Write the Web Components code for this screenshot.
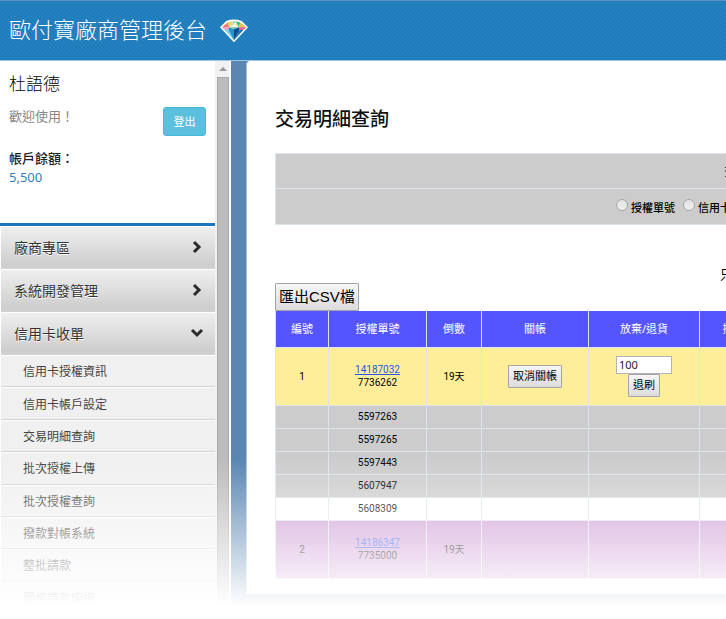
<!DOCTYPE html>
<html lang="zh-Hant">
<head>
<meta charset="utf-8">
<title>歐付寶廠商管理後台</title>
<style>
html, body { margin: 0; height: 100%; }
body { overflow: hidden; background: #fff; color: #000; font-family: "Noto Sans", "Noto Sans CJK TC", sans-serif; }
</style>
</head>
<body>
<app-shell>
  <brand-header slot="header">歐付寶廠商管理後台</brand-header>
  <side-bar slot="side">
    <account-card name="杜語德" balance="5,500"></account-card>
    <menu-group>廠商專區</menu-group>
    <menu-group>系統開發管理</menu-group>
    <menu-group open>信用卡收單</menu-group>
    <sub-menu items="信用卡授權資訊,信用卡帳戶設定,交易明細查詢,批次授權上傳,批次授權查詢,撥款對帳系統,整批請款,關帳請款明細"></sub-menu>
  </side-bar>
  <scroll-rail slot="side"></scroll-rail>
  <content-panel>
    <span slot="title">交易明細查詢</span>
    <filter-form></filter-form>
    <result-note>只</result-note>
    <classic-button large>匯出CSV檔</classic-button>
    <transaction-table></transaction-table>
  </content-panel>
</app-shell>
<script>
const define = (name, html, setup) => customElements.define(name, class extends HTMLElement {
  constructor() {
    super();
    const t = document.createElement('template');
    t.innerHTML = html;
    this.attachShadow({ mode: 'open' }).append(t.content.cloneNode(true));
  }
  connectedCallback() { if (setup) setup(this, this.shadowRoot); }
});

define('app-shell', `<style>
:host { display: flex; flex-direction: column; position: relative; height: 100vh; overflow: hidden; }
.body { flex: 1; display: flex; min-height: 0; }
.side { display: flex; flex: none; }
main { flex: 1; min-width: 0; display: flex; margin-left: 2px; background: #5b86b2; }
.fade { position: absolute; left: 0; right: 0; bottom: 0; height: 160px; pointer-events: none;
  background: linear-gradient(rgba(255,255,255,0), #fff 92%); }
</style>
<slot name="header"></slot>
<div class="body"><div class="side"><slot name="side"></slot></div><main><slot></slot></main></div>
<div class="fade"></div>`);

define('brand-header', `<style>
:host { display: block; flex: none; }
header { box-sizing: border-box; height: 61px; padding-left: 9px; display: flex; align-items: center; gap: 13px;
  border-top: 1px solid #5a92bf; border-bottom: 1px solid #9cc8e6; color: #fff;
  background: linear-gradient(45deg, #1f7ab9 25%, #2583c2 25% 50%, #1f7ab9 50% 75%, #2583c2 75%) 0 0 / 4px 4px; }
h1 { margin: 0; padding-bottom: 5px; font-size: 22px; line-height: 32px; font-weight: 300; font-family: "Noto Sans CJK TC", sans-serif; }
svg { width: 28px; height: 24px; }
</style>
<header><h1><slot></slot></h1>
<svg viewBox="0 0 30 24" aria-hidden="true">
<path d="M1 8 L7 2 Q15 -1 23 2 L29 8 L15 23 Z" fill="#fff" stroke="#fff" stroke-width="1.5" stroke-linejoin="round"/>
<path d="M2 8 L8 3 L10 8Z" fill="#ee7c74"/>
<path d="M8 3 L13 1.500 L10 8Z" fill="#f2cf4c"/>
<path d="M13 1.500 L17 1.500 L15 5Z" fill="#8dd3e8"/>
<path d="M13 1.500 L15 5 L10 8Z" fill="#c9e49a"/>
<path d="M17 1.500 L20 8 L15 5Z" fill="#f4e9a0"/>
<path d="M17 1.500 L22 3 L20 8Z" fill="#46b98e"/>
<path d="M22 3 L28 8 L20 8Z" fill="#f0c04e"/>
<path d="M10 8 L15 5 L20 8Z" fill="#eef8f8"/>
<path d="M2 8 L10 8 L9 11 L4 10Z" fill="#f39ab6"/>
<path d="M20 8 L28 8 L25 11 L21 11Z" fill="#e75e8c"/>
<path d="M4 10 L9 11 L15 22Z" fill="#7fd0e8"/>
<path d="M9 11 L10 8 L15 10 L15 22Z" fill="#2b93cc"/>
<path d="M15 10 L20 8 L21 11 L15 22Z" fill="#0b4c8c"/>
<path d="M21 11 L25 11 L15 22Z" fill="#1672b0"/>
<path d="M10 8 L20 8 L15 10Z" fill="#67c1a5"/>
</svg></header>`);

define('side-bar', `<style>
:host { display: block; width: 215px; background: #fff; }
</style><slot></slot>`);

define('account-card', `<style>
:host { display: block; box-sizing: border-box; padding: 10px 9px 36px; border-bottom: 3px solid #1b75bb; }
h2 { margin: 0; font-size: 17px; line-height: 26px; font-weight: 300; }
.row { display: flex; justify-content: space-between; align-items: flex-start; margin-top: 8px; }
.hi { font-size: 13px; line-height: 22px; color: #888; }
button { box-sizing: border-box; width: 43px; height: 29px; margin-top: 2px; padding: 0 0 2px; border: 1px solid #46b8da; border-radius: 3px;
  background: #5bc0de; color: #fff; font: 11px/16px "Noto Sans CJK TC", sans-serif; }
dl { margin: 13px 0 0; }
dt { font-size: 13px; line-height: 18px; font-weight: 500; color: #222; }
dd { margin: 0; font-size: 13px; line-height: 20px; color: #2f7fc0; }
</style>
<h2></h2>
<div class="row"><span class="hi">歡迎使用！</span><button type="button">登出</button></div>
<dl><dt>帳戶餘額：</dt><dd></dd></dl>`, (el, r) => {
  r.querySelector('h2').textContent = el.getAttribute('name');
  r.querySelector('dd').textContent = el.getAttribute('balance');
});

define('menu-group', `<style>
:host { display: block; }
button { box-sizing: border-box; width: 100%; height: 43px; padding: 0 12px 2px 13px; display: flex; align-items: center; justify-content: space-between;
  border: solid #fff; border-width: 1px 0 0 1px; background: linear-gradient(#efefef, #cdcdcd 92%, #d6d2d2);
  color: #333; font: 14px/20px "Noto Sans CJK TC", sans-serif; text-align: left; text-shadow: 0 1px 0 #fff; }
svg { width: 12px; height: 12px; fill: none; stroke: #2b2b2b; stroke-width: 3; overflow: visible; }
:host([open]) svg { transform: rotate(90deg); }
</style>
<button type="button"><span><slot></slot></span><svg viewBox="0 0 12 12" aria-hidden="true"><path d="M3 1 L8 6 L3 11"/></svg></button>`,
(el, r) => r.querySelector('button').setAttribute('aria-expanded', el.hasAttribute('open')));

define('sub-menu', `<style>
:host { display: block; }
ul { list-style: none; margin: 0; padding: 0; min-height: 259px; display: grid; grid-auto-rows: 1fr; }
li { display: flex; border: solid #fff; border-width: 1px 0 0 1px; }
a { flex: 1; display: flex; align-items: center; padding-left: 22px; background: #f0f0f0; border-bottom: 1px solid #d2d2d2;
  color: #444; text-decoration: none; font-size: 12px; line-height: 18px; font-family: "Noto Sans CJK TC", sans-serif; }
</style><nav><ul></ul></nav>`, (el, r) => {
  r.querySelector('ul').innerHTML = el.getAttribute('items').split(',').map(t => `<li><a href="#">${t}</a></li>`).join('');
});

define('scroll-rail', `<style>
:host { display: flex; flex-direction: column; width: 14px; background: #f1f1f1; }
.up { height: 16px; display: grid; place-items: center; padding-left: 2px; }
.up i { border: solid transparent; border-width: 0 4px 4px; border-bottom-color: #999; }
.thumb { flex: 1; margin-left: 2px; background: #bcbcbc; border: 1px solid #a9a9a9; }
</style><div class="up"><i></i></div><div class="thumb"></div>`);

define('content-panel', `<style>
:host { flex: 1; min-width: 0; display: block; align-self: flex-start; box-sizing: border-box; margin-left: 15px; padding: 42px 0 15px 28px; overflow: hidden;
  background: #fff; border-left: 1px solid #a9c3dd; border-top-left-radius: 4px; }
h2 { margin: 0 0 20px; font-size: 19px; line-height: 30px; font-weight: 500; font-family: "Noto Sans CJK TC", sans-serif; color: #111; }
</style><h2><slot name="title"></slot></h2><slot></slot>`);

define('filter-form', `<style>
:host { display: block; min-width: 942px; font: 500 11px/16px "Noto Sans CJK TC", sans-serif; }
form { border: solid #dde4ec; border-width: 1px 0 1px 1px; background: #ccc; }
.head { height: 34px; display: flex; align-items: center; justify-content: center; border-bottom: 1px solid #dde4ec; }
.opts { height: 35px; display: flex; align-items: center; gap: 8px; padding-left: 340px; }
label { display: flex; gap: 3px; }
input { appearance: none; box-sizing: border-box; width: 12px; height: 12px; margin: 0; border: 1px solid #a6a6a6; border-radius: 50%; background: linear-gradient(#e2e2e2, #efefef); }
</style>
<form><div class="head">查詢條件</div><div class="opts">
<label><input type="radio" name="kind">授權單號</label><label><input type="radio" name="kind">信用卡</label></div></form>`);

define('result-note', `<style>
:host { display: block; margin-top: 40px; padding-left: 445px; font-size: 13px; line-height: 18px; white-space: nowrap; }
</style><slot></slot>`);

define('classic-button', `<style>
:host { display: inline-block; vertical-align: top; }
button { box-sizing: border-box; height: 23px; padding: 0 4px; border: 1px solid #a5a5a5; border-radius: 1px; background: linear-gradient(#f6f6f6, #dcdcdc);
  color: #000; font: 11px/16px "Liberation Sans", "Noto Sans CJK TC", sans-serif; white-space: nowrap; }
:host([large]) { display: block; }
:host([large]) button { height: 28px; padding: 0 3px; font-size: 15px; line-height: 22px; display: block; }
</style><button type="button"><slot></slot></button>`);

define('transaction-table', `<style>
:host { display: block; }
table { width: 942px; table-layout: fixed; border-collapse: collapse; font: 10px/13px Roboto, "Noto Sans CJK TC", sans-serif; text-align: center; }
th, td { box-sizing: border-box; padding: 0; border: 1px solid #dde4ec; }
th { height: 36px; background: #5555ff; color: #fff; font: 11px/16px "Noto Sans", "Noto Sans CJK TC", sans-serif; border-top: 0; }
td { height: 23px; background: #ccc; }
.due td { height: 58px; background: #ffee99; }
.plain td { background: #fff; }
.old td { height: 58px; background: #ce9bd5; }
a { display: block; color: #2a55e8; }
input { box-sizing: border-box; display: block; width: 56px; height: 18px; margin: 0 auto; padding: 0 2px; border: 1px solid #b4b4b4; font: 11px/14px "Noto Sans", sans-serif; color: #222; }
</style>
<table>
<colgroup><col style="width:53px"><col style="width:98px"><col style="width:55px"><col style="width:107px"><col style="width:111px"><col style="width:68px"><col></colgroup>
<thead><tr><th>編號</th><th>授權單號</th><th>倒數</th><th>關帳</th><th>放棄/退貨</th><th>撥款</th><th></th></tr></thead>
<tbody></tbody></table>`, (el, r) => {
  const row = (cls, cells) => `<tr class="${cls}">${[...cells, ...Array(7 - cells.length).fill('')].map(c => `<td>${c}</td>`).join('')}</tr>`;
  const pair = (a, b) => `<a href="#">${a}</a>${b}`;
  r.querySelector('tbody').innerHTML =
    row('due', ['1', pair('14187032', '7736262'), '19天', '<classic-button>取消關帳</classic-button>',
      '<input type="text" value="100" aria-label="退刷金額"><classic-button>退刷</classic-button>']) +
    ['5597263', '5597265', '5597443', '5607947'].map(n => row('', ['', n])).join('') +
    row('plain', ['', '5608309']) +
    row('old', ['2', pair('14186347', '7735000'), '19天']);
});
</script>
</body>
</html>
